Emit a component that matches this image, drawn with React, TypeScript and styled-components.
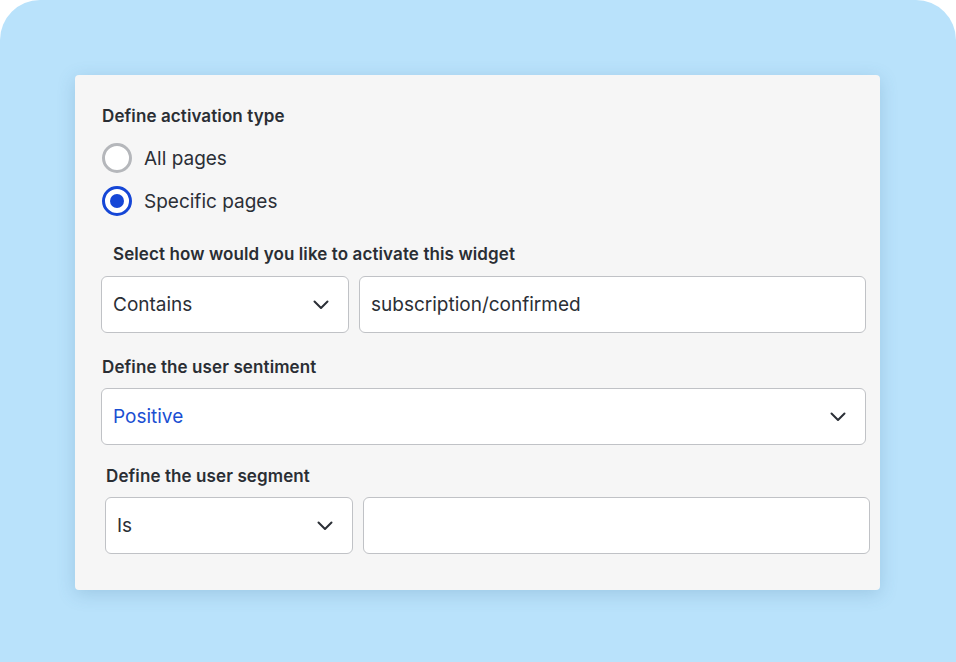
import React from 'react';
import styled, { createGlobalStyle } from 'styled-components';

const GlobalStyle = createGlobalStyle`
  html, body {
    margin: 0;
    padding: 0;
    background: #ffffff;
  }
  body {
    font-family: Inter, "Noto Sans", "Liberation Sans", sans-serif;
    color: #2b2f36;
  }
`;

const Backdrop = styled.div`
  width: 956px;
  height: 662px;
  box-sizing: border-box;
  background: #b9e2fb;
  border-radius: 40px 40px 0 0;
  padding: 75px 76px 0 75px;
  overflow: hidden;
`;

const Card = styled.div`
  width: 805px;
  height: 515px;
  box-sizing: border-box;
  background: #f6f6f6;
  border-radius: 4px;
  box-shadow: 0 4px 18px rgba(60, 110, 150, 0.22);
  padding: 31px 14px 0 26px;
  display: flex;
  flex-direction: column;
`;

const Label = styled.div<{ $indent?: number; $top?: number }>`
  font-size: 17px;
  line-height: 20px;
  font-weight: 600;
  letter-spacing: 0.1px;
  color: #2a2e34;
  margin-left: ${(p) => p.$indent ?? 0}px;
  margin-top: ${(p) => p.$top ?? 0}px;
`;

const RadioGroup = styled.div`
  display: flex;
  flex-direction: column;
  gap: 13px;
  margin: 17px 0 0 1px;
`;

const RadioRow = styled.label`
  display: flex;
  align-items: center;
  gap: 12px;
  height: 30px;
  font-size: 19px;
  color: #2b2f36;
`;

const RadioCircle = styled.span<{ $checked?: boolean }>`
  width: 30px;
  height: 30px;
  box-sizing: border-box;
  border-radius: 50%;
  border: 3px solid ${(p) => (p.$checked ? '#1546d6' : '#b5b7bb')};
  background: #ffffff;
  display: flex;
  align-items: center;
  justify-content: center;
  &::after {
    content: '';
    display: ${(p) => (p.$checked ? 'block' : 'none')};
    width: 14px;
    height: 14px;
    border-radius: 50%;
    background: #1546d6;
  }
`;

const FieldRow = styled.div<{ $indent?: number; $top?: number }>`
  display: flex;
  gap: 10px;
  margin-left: ${(p) => p.$indent ?? 0}px;
  margin-right: ${(p) => -(p.$indent ?? 0)}px;
  margin-top: ${(p) => p.$top ?? 0}px;
`;

const Box = styled.div<{ $width?: number; $accent?: boolean }>`
  ${(p) => (p.$width ? `width: ${p.$width}px; flex: none;` : 'flex: 1;')}
  height: 57px;
  box-sizing: border-box;
  background: #ffffff;
  border: 1.5px solid #c0c2c6;
  border-radius: 6px;
  display: flex;
  align-items: center;
  justify-content: space-between;
  padding: 0 19px 0 11px;
  font-size: 19px;
  color: ${(p) => (p.$accent ? '#1a4fd2' : '#2b2f36')};
`;

const Chevron = () => (
  <svg width="16" height="10" viewBox="0 0 16 10" fill="none">
    <path d="M1.5 1.5L8 8L14.5 1.5" stroke="#2b2f36" strokeWidth="2" strokeLinecap="round" strokeLinejoin="round" />
  </svg>
);

const Select: React.FC<{ value: string; width?: number; accent?: boolean }> = ({ value, width, accent }) => (
  <Box $width={width} $accent={accent}>
    <span>{value}</span>
    <Chevron />
  </Box>
);

const App: React.FC = () => {
  return (
    <>
      <GlobalStyle />
      <Backdrop>
        <Card>
          <Label $indent={1}>Define activation type</Label>
          <RadioGroup>
            <RadioRow>
              <RadioCircle />
              All pages
            </RadioRow>
            <RadioRow>
              <RadioCircle $checked />
              Specific pages
            </RadioRow>
          </RadioGroup>

          <Label $indent={12} $top={28}>Select how would you like to activate this widget</Label>
          <FieldRow $top={12}>
            <Select value="Contains" width={248} />
            <Box>subscription/confirmed</Box>
          </FieldRow>

          <Label $indent={1} $top={24}>Define the user sentiment</Label>
          <FieldRow $top={11}>
            <Select value="Positive" accent />
          </FieldRow>

          <Label $indent={5} $top={21}>Define the user segment</Label>
          <FieldRow $indent={4} $top={11}>
            <Select value="Is" width={248} />
            <Box />
          </FieldRow>
        </Card>
      </Backdrop>
    </>
  );
};

export default App;
